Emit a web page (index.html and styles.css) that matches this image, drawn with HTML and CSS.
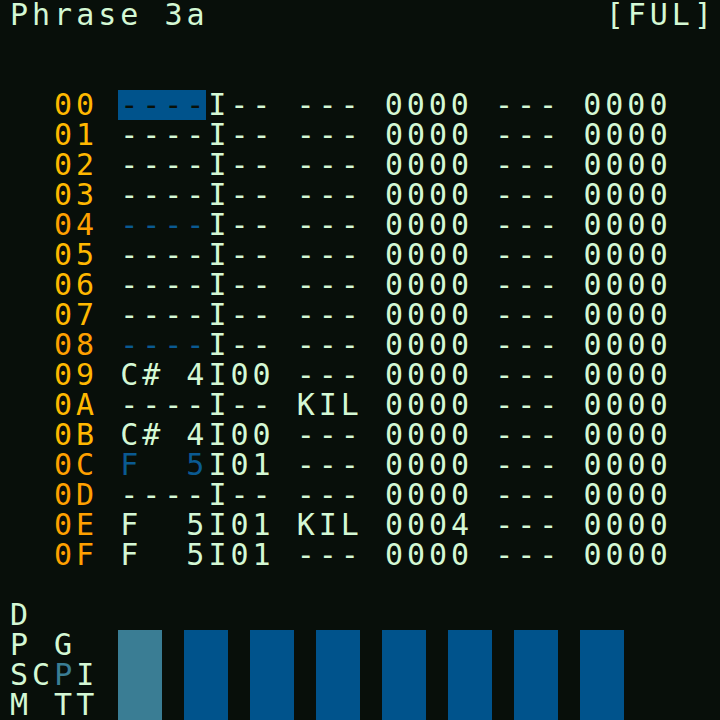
FILE: index.html
```html
<!DOCTYPE html>
<html>
<head>
<meta charset="utf-8">
<link rel="stylesheet" href="styles.css">
</head>
<body>
<div class="screen">
  <div class="line title">Phrase 3a                  [FUL]</div>
  <div class="phrase">
    <div class="line"><span class="num">00</span> <span class="cur">----</span>I-- --- 0000 --- 0000</div>
    <div class="line"><span class="num">01</span> ----I-- --- 0000 --- 0000</div>
    <div class="line"><span class="num">02</span> ----I-- --- 0000 --- 0000</div>
    <div class="line"><span class="num">03</span> ----I-- --- 0000 --- 0000</div>
    <div class="line"><span class="num beat">04</span> <span class="blue">----</span>I-- --- 0000 --- 0000</div>
    <div class="line"><span class="num">05</span> ----I-- --- 0000 --- 0000</div>
    <div class="line"><span class="num">06</span> ----I-- --- 0000 --- 0000</div>
    <div class="line"><span class="num">07</span> ----I-- --- 0000 --- 0000</div>
    <div class="line"><span class="num beat">08</span> <span class="blue">----</span>I-- --- 0000 --- 0000</div>
    <div class="line"><span class="num">09</span> C# 4I00 --- 0000 --- 0000</div>
    <div class="line"><span class="num">0A</span> ----I-- KIL 0000 --- 0000</div>
    <div class="line"><span class="num">0B</span> C# 4I00 --- 0000 --- 0000</div>
    <div class="line"><span class="num beat">0C</span> <span class="blue">F  5</span>I01 --- 0000 --- 0000</div>
    <div class="line"><span class="num beat">0D</span> ----I-- --- 0000 --- 0000</div>
    <div class="line"><span class="num beat">0E</span> F  5I01 KIL 0004 --- 0000</div>
    <div class="line"><span class="num beat">0F</span> F  5I01 --- 0000 --- 0000</div>
  </div>
  <div class="bottom">
    <div class="map">
      <div class="line">D</div>
      <div class="line">P G</div>
      <div class="line">SC<span class="teal">P</span>I</div>
      <div class="line">M TT</div>
    </div>
    <div class="bars">
      <div class="bar active"></div>
      <div class="bar"></div>
      <div class="bar"></div>
      <div class="bar"></div>
      <div class="bar"></div>
      <div class="bar"></div>
      <div class="bar"></div>
      <div class="bar"></div>
    </div>
  </div>
</div>
</body>
</html>
```
FILE: styles.css
```css
html, body {
  margin: 0;
  padding: 0;
  background: #080f0a;
}
.screen {
  width: 720px;
  height: 720px;
  overflow: hidden;
  padding-left: 10px;
  box-sizing: border-box;
  font-family: "DejaVu Sans Mono", monospace;
  font-size: 30px;
  line-height: 30px;
  letter-spacing: 4px;
  color: #d4f8d4;
}
.line {
  height: 30px;
  white-space: pre;
}
.phrase {
  margin-top: 60px;
  padding-left: 44px;
}
.num { color: #ffb800; }
.num.beat { color: #ffa000; }
.blue { color: #0a5a92; }
.teal { color: #3a7d94; }
.cur {
  display: inline-block;
  width: 88px;
  height: 30px;
  margin: 0 2px 0 -2px;
  padding-left: 2px;
  box-sizing: border-box;
  background: #00538c;
  color: #081008;
  vertical-align: top;
}
.bottom {
  margin-top: 30px;
  display: flex;
}
.map {
  width: 108px;
  flex: none;
}
.bars {
  display: flex;
  align-items: flex-end;
  gap: 22px;
  height: 120px;
}
.bar {
  width: 44px;
  height: 90px;
  background: #00538c;
}
.bar.active {
  background: #3a7d94;
}
```
